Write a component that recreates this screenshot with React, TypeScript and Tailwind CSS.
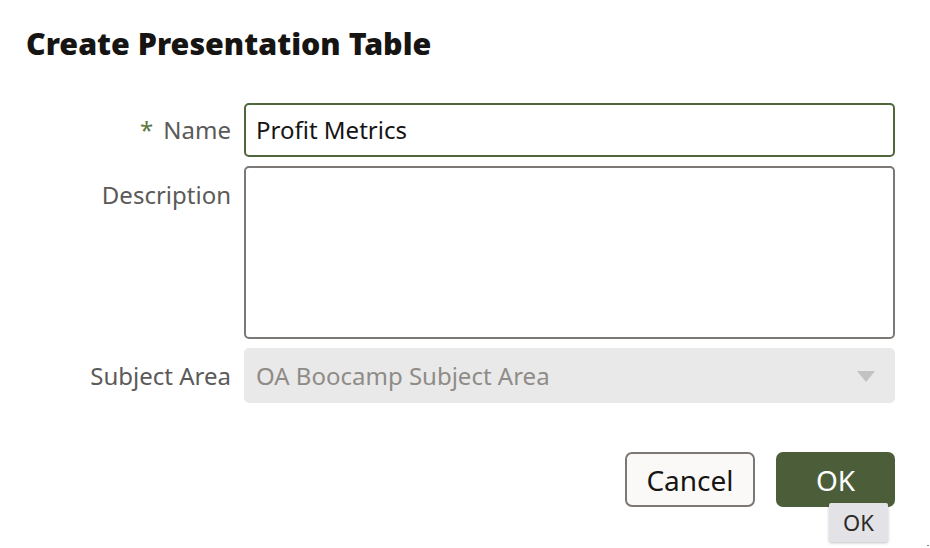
import React from "react";

export default function App() {
  return (
    <div className="relative w-[930px] h-[548px] bg-white overflow-hidden" style={{ fontFamily: '"Noto Sans", "Open Sans", sans-serif' }}>
      <div className="pl-[26px] pr-[35px] pt-[24px]">
        <h1 className="text-[30.4px] leading-[40px] font-black text-[#161513] tracking-[0px]">Create Presentation Table</h1>
        <div className="mt-[39px] grid grid-cols-[205px_1fr] gap-x-[13px] gap-y-[9px] text-[24px]">
          <label className="flex items-center justify-end text-[#5b5a58] h-[54px]">
            <span className="text-[#5f7a45] mr-[10px]">*</span>Name
          </label>
          <div className="h-[54px] rounded-[5px] border-2 border-[#50663b] flex items-center px-[10px] text-[#161513]">Profit Metrics</div>
          <label className="flex justify-end text-[#5b5a58] pt-[11px]">Description</label>
          <div className="h-[173px] rounded-[5px] border-2 border-[#7c7875]"></div>
          <label className="flex items-center justify-end text-[#5b5a58] h-[55px]">Subject Area</label>
          <div className="h-[55px] rounded-[5px] bg-[#e9e9e9] flex items-center justify-between pl-[12px] pr-[20px] text-[#8f8c88]">
            <span>OA Boocamp Subject Area</span>
            <svg width="18" height="12" viewBox="0 0 18 12"><path d="M0 1h18L9 12z" fill="#c2c2c2" /></svg>
          </div>
        </div>
        <div className="mt-[49px] flex justify-end gap-[21px] text-[28px]">
          <button className="w-[130px] h-[55px] rounded-[7px] border-2 border-[#7c7875] bg-[#fbf9f8] text-[#161513]">Cancel</button>
          <button className="w-[119px] h-[55px] rounded-[7px] bg-[#4b5e39] text-white">OK</button>
        </div>
      </div>
      <div className="absolute left-[829px] top-[503px] w-[59px] h-[39px] bg-[#e3e2e6] rounded-[2px] shadow-[0_1px_3px_rgba(0,0,0,0.25)] flex items-center justify-center text-[22px] text-[#2b2a28]">OK</div>
      <div className="absolute left-[927px] top-[545px] w-[2px] h-[1px] bg-[#888]"></div>
    </div>
  );
}
